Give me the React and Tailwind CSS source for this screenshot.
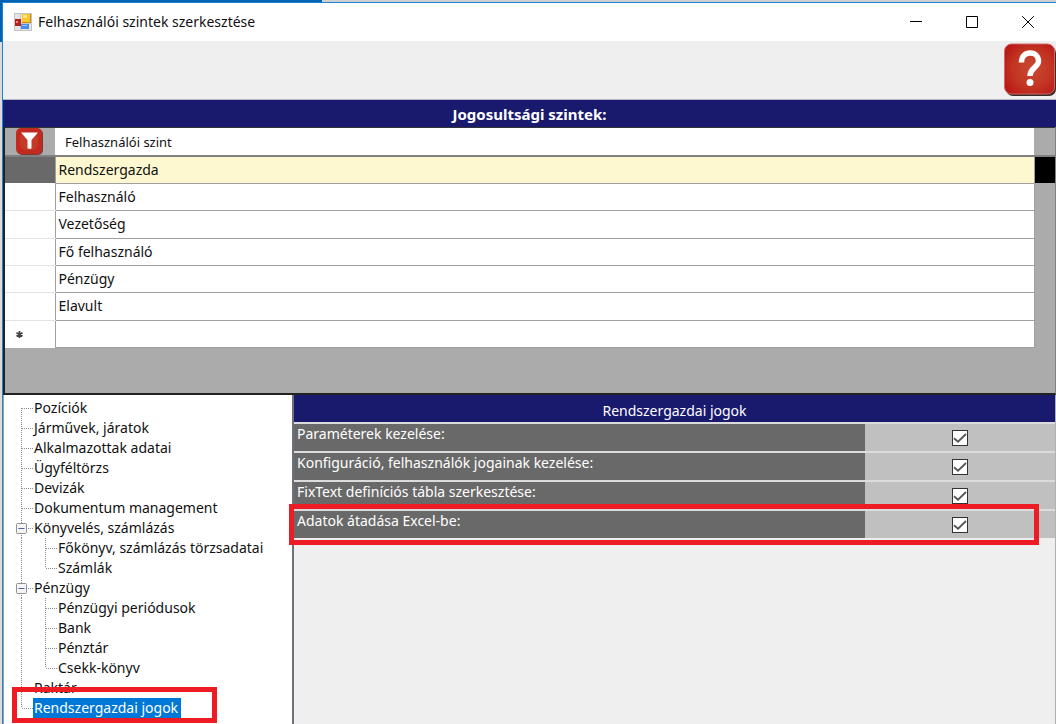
import { useState } from "react";

const LEVELS = [
  "Rendszergazda",
  "Felhasználó",
  "Vezetőség",
  "Fő felhasználó",
  "Pénzügy",
  "Elavult",
];

const TREE = [
  { label: "Pozíciók" },
  { label: "Járművek, járatok" },
  { label: "Alkalmazottak adatai" },
  { label: "Ügyféltörzs" },
  { label: "Devizák" },
  { label: "Dokumentum management" },
  {
    label: "Könyvelés, számlázás",
    children: ["Főkönyv, számlázás törzsadatai", "Számlák"],
  },
  {
    label: "Pénzügy",
    children: ["Pénzügyi periódusok", "Bank", "Pénztár", "Csekk-könyv"],
  },
  { label: "Raktár" },
  { label: "Rendszergazdai jogok", selected: true },
];

const RIGHTS = [
  { id: "params", label: "Paraméterek kezelése:" },
  { id: "config", label: "Konfiguráció, felhasználók jogainak kezelése:" },
  { id: "fixtext", label: "FixText definíciós tábla szerkesztése:" },
  { id: "excel", label: "Adatok átadása Excel-be:", marked: true },
];

function FormIcon() {
  return (
    <svg width="18" height="18" viewBox="0 0 18 18" aria-hidden="true">
      <rect x="0.5" y="0.5" width="17" height="17" fill="#e4e4e4" stroke="#c4c4c4" />
      <path d="M6.5 1v16M1 10.5h16" stroke="#c9c9c9" />
      <rect x="8" y="1" width="9" height="9" fill="#c98f0c" />
      <rect x="8" y="1" width="8" height="8" fill="#f8c72c" />
      <rect x="9" y="2" width="4" height="3" fill="#ffe27c" />
      <rect x="1" y="6" width="6" height="7" fill="#b5211c" />
      <rect x="2" y="8" width="2" height="2" fill="#f0877e" />
      <rect x="7" y="11" width="8" height="5" fill="#4b8bea" />
      <rect x="8" y="12" width="5" height="1" fill="#9cc3fb" />
    </svg>
  );
}

function TitleBar() {
  const button = "flex w-14 items-center justify-center";

  return (
    <header className="flex h-[38px] items-stretch bg-white pl-[11px]">
      <div className="flex flex-1 items-center gap-[6px]">
        <FormIcon />
        <h1 className="text-[14px] leading-5">Felhasználói szintek szerkesztése</h1>
      </div>
      <button type="button" aria-label="Kis méret" className={button}>
        <svg width="12" height="12" viewBox="0 0 12 12" stroke="#000">
          <path d="M0 5.5h12" />
        </svg>
      </button>
      <button type="button" aria-label="Teljes méret" className={button}>
        <svg width="12" height="12" viewBox="0 0 12 12" fill="none" stroke="#000">
          <path d="M0.5 0.5h11v11h-11z" />
        </svg>
      </button>
      <button type="button" aria-label="Bezárás" className={button}>
        <svg width="12" height="12" viewBox="0 0 12 12" stroke="#000">
          <path d="M0.2 0.2l11.6 11.6M11.8 0.2L0.2 11.8" />
        </svg>
      </button>
    </header>
  );
}

function HelpIcon() {
  return (
    <svg width="52" height="54" viewBox="0 0 52 54" aria-hidden="true">
      <defs>
        <radialGradient id="help-red" cx="0.55" cy="0.5" r="0.65">
          <stop offset="0" stopColor="#c94a33" />
          <stop offset="0.6" stopColor="#c23422" />
          <stop offset="1" stopColor="#b91717" />
        </radialGradient>
      </defs>
      <rect x="2" y="3" width="50" height="50" rx="7" fill="#3a2a28" />
      <rect x="0.5" y="1" width="50" height="50" rx="7" fill="url(#help-red)" stroke="#cf6a62" />
      <path
        d="M17.500 19.500c0-6.500 3.700-9.500 8.700-9.500s8.300 3.500 8.300 8.200c0 6.300-8.500 6.300-8.500 14.800"
        fill="none"
        stroke="#fff"
        strokeWidth="5.500"
      />
      <circle cx="26" cy="39.500" r="3.500" fill="#fff" />
    </svg>
  );
}

function FilterIcon() {
  return (
    <svg width="27" height="27" viewBox="0 0 27 27" aria-hidden="true">
      <rect x="1" y="1" width="26" height="26" rx="5" fill="#7b3a34" />
      <rect x="0" y="0" width="26" height="26" rx="5" fill="#c2291f" />
      <rect x="4" y="4" width="18" height="18" rx="6" fill="#c63a28" />
      <path d="M5 4.500h17l-6.500 7.500v8c0 1.200-4 1.200-4 0v-8z" fill="#fff" />
    </svg>
  );
}

function LevelsGrid() {
  return (
    <section className="h-[268px] border-r border-b-2 border-l-2 border-[#222] border-r-[#808080] bg-[#ababab]">
      <table className="h-[221px] w-full border-collapse text-left">
        <thead>
          <tr className="h-[27px] border-t border-b-2 border-t-[#333] border-b-[#808080]">
            <th className="w-[50px] py-0">
              <button type="button" aria-label="Szűrő" className="ml-[11px] block">
                <FilterIcon />
              </button>
            </th>
            <th className="bg-white py-0 pl-[10px] text-[13px] leading-5 font-normal">
              Felhasználói szint
            </th>
            <td className="w-[21px]" />
          </tr>
        </thead>
        <tbody>
          {LEVELS.map((level, index) => (
            <tr key={level} className="h-[27px]">
              <td
                className={
                  index === 0
                    ? "bg-[#696969]"
                    : "border-r border-b border-r-[#a0a0a0] border-b-[#e3e3e3] bg-white"
                }
              />
              <td
                className={
                  index === 0
                    ? "border border-[#a0a0a0] bg-[#fef8d0] py-0 pl-[3px] leading-5"
                    : "border border-[#a0a0a0] bg-white py-0 pl-[3px] leading-5"
                }
              >
                {level}
              </td>
              <td className={index === 0 ? "bg-black" : ""} />
            </tr>
          ))}
          <tr className="h-[27px]">
            <td className="border-r border-[#a0a0a0] bg-white py-0 pl-[11px] leading-5">
              <svg width="7" height="7" viewBox="0 0 7 7" stroke="#444" strokeWidth="1.800">
                <path d="M3.500 0v7M0.500 1.700l6 3.600M6.500 1.700l-6 3.600" />
              </svg>
            </td>
            <td className="border border-[#a0a0a0] bg-white" />
            <td />
          </tr>
        </tbody>
      </table>
    </section>
  );
}

// One 20px high piece of the dotted tree lines
function Branch({ first, last, arm = true }) {
  return (
    <svg
      width="16"
      height="20"
      viewBox="0 0 16 20"
      stroke="#8c8c8c"
      strokeDasharray="1 1"
      className="shrink-0"
      aria-hidden="true"
    >
      <path d={`M4.500 ${first ? 10 : 0}V${last ? 10 : 20}`} />
      {arm && <path d="M5 10.500h11" />}
    </svg>
  );
}

function Expander({ open, onClick }) {
  return (
    <button
      type="button"
      aria-label="Csomópont nyitása vagy zárása"
      aria-expanded={open}
      onClick={onClick}
      className="w-4 shrink-0"
    >
      <svg width="16" height="20" viewBox="0 0 16 20" className="overflow-visible">
        <path d="M4.500 0v5M4.500 15v5M11 10.500h5" stroke="#8c8c8c" strokeDasharray="1 1" />
        <rect x="-0.500" y="5.500" width="10" height="10" rx="1" fill="#f4f4f4" stroke="#919191" />
        <path d="M1.500 10.500h6" stroke="#4b63a7" />
        {!open && <path d="M4.500 7.500v6" stroke="#4b63a7" />}
      </svg>
    </button>
  );
}

function TreeNode({ node, first, last }) {
  const [open, setOpen] = useState(true);
  const children = node.children || [];

  return (
    <li>
      <div className="relative flex h-5 items-center">
        {children.length > 0 ? (
          <Expander open={open} onClick={() => setOpen(!open)} />
        ) : (
          <Branch first={first} last={last} />
        )}
        {node.selected ? (
          <span className="bg-[#0078d7] pr-[3px] pl-px leading-5 text-white">{node.label}</span>
        ) : (
          <span className="px-px leading-5">{node.label}</span>
        )}
        {node.selected && (
          <span className="pointer-events-none absolute -top-[11px] -left-[5px] h-9 w-[205px] border-5 border-[#ed1c24]" />
        )}
      </div>
      {open && children.length > 0 && (
        <ul>
          {children.map((child, index) => (
            <li key={child} className="flex h-5 items-center">
              <Branch arm={false} />
              <span className="w-2 shrink-0" />
              <Branch last={index === children.length - 1} />
              <span className="px-px leading-5">{child}</span>
            </li>
          ))}
        </ul>
      )}
    </li>
  );
}

function RightRow({ right }) {
  const [checked, setChecked] = useState(true);

  return (
    <div className="relative flex h-[29px] border-t-2 border-[#dcdcdc]">
      <label htmlFor={right.id} className="w-3/4 bg-[#696969] pl-[3px] leading-5 text-white">
        {right.label}
      </label>
      <div className="grid w-1/4 place-items-center bg-[#c0c0c0]">
        <input
          id={right.id}
          type="checkbox"
          checked={checked}
          onChange={(e) => setChecked(e.target.checked)}
          className="col-start-1 row-start-1 size-4 appearance-none border border-[#333] bg-white"
        />
        {checked && (
          <svg
            width="16"
            height="16"
            viewBox="0 0 16 16"
            fill="none"
            stroke="#555"
            strokeWidth="1.800"
            className="pointer-events-none col-start-1 row-start-1"
          >
            <path d="M2 8.300l4 3.400 8-7.700" />
          </svg>
        )}
      </div>
      {right.marked && (
        <span className="pointer-events-none absolute -top-[7px] right-4 -left-[5px] h-[41px] border-5 border-[#ed1c24]" />
      )}
    </div>
  );
}

export default function App() {
  return (
    <div className="flex min-h-screen flex-col overflow-hidden bg-[#dcdcdc] font-['Noto_Sans',sans-serif] text-[14px] text-[#111]">
      <div className="flex h-[2px]">
        <div className="w-[322px] bg-[#0063b1]" />
        <div className="flex-1 bg-[#cfcfcf]" />
      </div>
      <div className="flex flex-1">
        <div className="w-[2px]">
          <div className="h-10 bg-[#0063b1]" />
        </div>
        <div className="flex min-w-0 flex-1 flex-col border-t border-l border-[#1883d7] bg-[#efefef]">
          <TitleBar />
          <div className="flex h-[59px] items-start justify-end border-b border-[#b4b4c4] pt-[2px]">
            <button type="button" aria-label="Súgó">
              <HelpIcon />
            </button>
          </div>
          <h2 className="h-[27px] bg-[#19196e] text-center text-[15px] leading-7 font-bold text-white">
            Jogosultsági szintek:
          </h2>
          <LevelsGrid />
          <div className="flex flex-1">
            <nav
              aria-label="Jogok"
              className="w-[291px] shrink-0 border-r-2 border-l border-r-[#70707a] border-l-[#a0a0a0] bg-white pt-[3px] pl-[13px]"
            >
              <ul>
                {TREE.map((node, index) => (
                  <TreeNode
                    key={node.label}
                    node={node}
                    first={index === 0}
                    last={index === TREE.length - 1}
                  />
                ))}
              </ul>
            </nav>
            <section className="min-w-0 flex-1 border-r border-[#b0b0b0]">
              <h2 className="h-[27px] bg-[#19196e] text-center leading-8 text-white">
                Rendszergazdai jogok
              </h2>
              {RIGHTS.map((right) => (
                <RightRow key={right.id} right={right} />
              ))}
            </section>
          </div>
        </div>
      </div>
    </div>
  );
}
